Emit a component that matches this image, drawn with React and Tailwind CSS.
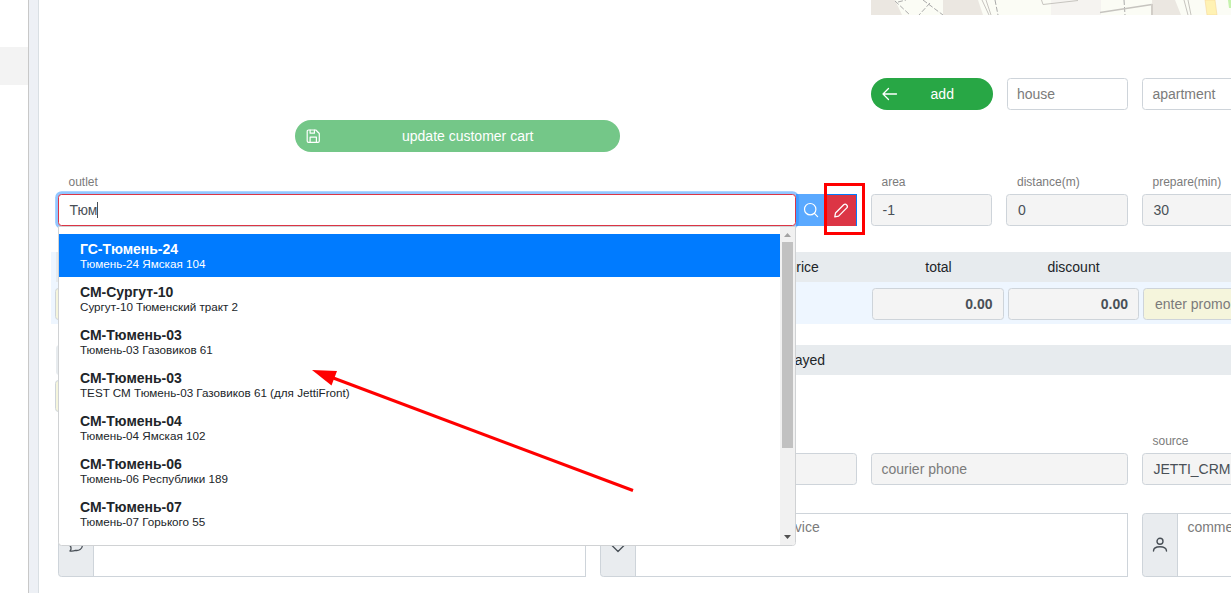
import React from "react";

const cx = (...a) => a.filter(Boolean).join(" ");

const outlets = [
  { name: "ГС-Тюмень-24", address: "Тюмень-24 Ямская 104" },
  { name: "СМ-Сургут-10", address: "Сургут-10 Тюменский тракт 2" },
  { name: "СМ-Тюмень-03", address: "Тюмень-03 Газовиков 61" },
  { name: "СМ-Тюмень-03", address: "TEST СМ Тюмень-03 Газовиков 61 (для JettiFront)" },
  { name: "СМ-Тюмень-04", address: "Тюмень-04 Ямская 102" },
  { name: "СМ-Тюмень-06", address: "Тюмень-06 Республики 189" },
  { name: "СМ-Тюмень-07", address: "Тюмень-07 Горького 55" },
];

function Icon({ className, children }) {
  return (
    <svg
      viewBox="0 0 16 16"
      fill="none"
      stroke="currentColor"
      strokeLinecap="round"
      strokeLinejoin="round"
      className={cx("h-4 w-4 shrink-0", className)}
    >
      {children}
    </svg>
  );
}

const ArrowLeftIcon = (props) => (
  <Icon {...props}>
    <path d="M6.500 2.500 1 8 6.500 13.500M1 8h13.500" strokeWidth="1.3" />
  </Icon>
);

const SaveIcon = (props) => (
  <Icon {...props}>
    <path
      d="M2.500 2h7.300l3.500 3.500V13a1.300 1.300 0 0 1-1.300 1.300H2.500A1.300 1.300 0 0 1 1.200 13V3.300A1.300 1.300 0 0 1 2.500 2Z"
      strokeWidth="1.2"
    />
    <path d="M4.100 2.200v3h4.300v-3M4.100 14V9.200h6.300V14" strokeWidth="1.2" />
  </Icon>
);

const SearchIcon = (props) => (
  <Icon {...props}>
    <circle cx="7.2" cy="7.2" r="5.7" strokeWidth="1.2" />
    <path d="m11.400 11.400 3.200 3.200" strokeWidth="1.2" />
  </Icon>
);

const PencilIcon = (props) => (
  <Icon {...props}>
    <path
      d="M1.800 13.800 2.500 10 10.700 1.800a2.200 2.200 0 0 1 3.100 3.100L5.600 13.100Z"
      strokeWidth="1.3"
    />
  </Icon>
);

const PersonIcon = (props) => (
  <Icon {...props}>
    <circle cx="8" cy="4.3" r="3" strokeWidth="1.4" />
    <path d="M1.500 14c0-3 2.500-4.300 6.500-4.300s6.500 1.300 6.500 4.300" strokeWidth="1.4" />
  </Icon>
);

const BubbleIcon = (props) => (
  <Icon {...props}>
    <path
      d="M2 14c1-1.200 1.300-2.200 1-3.400C.4 6.400 3 2 8 2s7 3.200 6.500 6.500C14 12 11 14 7.500 13.400 6 14 4 14.200 2 14Z"
      strokeWidth="1.3"
    />
  </Icon>
);

const DiamondIcon = (props) => (
  <Icon {...props}>
    <path d="M8 14.500 1.500 8 4 3h8l2.500 5ZM5 8h6" strokeWidth="1.3" />
  </Icon>
);

function Label({ children, className }) {
  return (
    <div
      className={cx(
        "h-6 pl-[10.500px] text-xs leading-6 text-[#7b7b7b]",
        className,
      )}
    >
      {children}
    </div>
  );
}

function Field({ children, className, pad = "px-[10.500px]" }) {
  return (
    <div
      className={cx(
        "flex h-8 shrink-0 items-center overflow-hidden rounded-[3.500px] border border-[#ced4da] whitespace-nowrap",
        pad,
        className,
      )}
    >
      {children}
    </div>
  );
}

function Comment({ icon, text, className }) {
  return (
    <div className={cx("flex h-16 w-[528px] shrink-0", className)}>
      <div className="flex w-9 shrink-0 items-center justify-center rounded-l-[3.500px] border border-[#ced4da] bg-[#e9ecef] text-[#495057]">
        {icon}
      </div>
      <div className="-ml-px grow border border-[#ced4da] px-[9.400px] pt-[3px] leading-[21px] whitespace-nowrap text-[#7b7b7b]">
        {text}
      </div>
    </div>
  );
}

function MapStrip() {
  return (
    <svg viewBox="0 0 360 15" className="h-[15px] w-[360px] shrink-0">
      <rect width="360" height="15" fill="#fbfcf5" />
      <path d="M0 0h24l7 15H0ZM72 0h35l5 15H72ZM281 0h23l6 15h-29Z" fill="#ebe7e1" />
      <path d="M180 0h50v15h-50Z" fill="#f5f3f0" />
      <path
        d="m24 1 15 14M27 2l8-2M59 3 48 15M52 0l20 15M124 0l3 15M253 0l1 15"
        stroke="#aaa"
        strokeDasharray="5 2"
        fill="none"
      />
      <path d="m111 0 7 15M115 0l5 15M313 0l4 15M317 0l3 15" stroke="#c6c4bf" fill="none" />
      <path d="m170.500 0 1.500 4.500 35-4" stroke="#c6c4bf" fill="none" />
      <path d="m229 12.500 52-8" stroke="#c6c4bf" strokeWidth="1.500" />
      <path d="M281 4v11" stroke="#d2cec8" strokeWidth="2" />
      <path d="M334 0h10l2 15h-10Z" fill="#fff2b3" stroke="#f7d69a" strokeWidth=".6" />
      <path d="M357 0h3v8h-2Z" fill="#c5f2ad" />
    </svg>
  );
}

function OutletMenu() {
  return (
    <div className="absolute top-8 left-0 z-10 flex h-80 w-[738px] overflow-hidden rounded-b-[3.500px] border border-[#d0d2d4] bg-white">
      <div className="grow pt-[7px]">
        {outlets.map((o, i) => (
          <div
            key={i}
            className={cx(
              "h-[43px] pt-[5px] pl-[21px]",
              i === 0 ? "bg-[#007bff] text-white" : "text-[#212529]",
            )}
          >
            <div className="text-sm leading-[21px] font-bold">{o.name}</div>
            <div className="-mt-1 text-[11.670px] leading-[15px]">
              {o.address}
            </div>
          </div>
        ))}
      </div>
      {/* scrollbar */}
      <div className="flex w-[15px] shrink-0 flex-col items-center bg-[#f1f1f1]">
        <svg viewBox="0 0 15 15" className="h-[15px] w-[15px]">
          <path d="M4 10h7L7.500 6Z" fill="#a3a3a3" />
        </svg>
        <div className="h-[206px] w-[11px] bg-[#c1c1c1]" />
        <svg viewBox="0 0 15 15" className="mt-auto h-[15px] w-[15px]">
          <path d="M4 5h7L7.500 9Z" fill="#505050" />
        </svg>
      </div>
    </div>
  );
}

function OutletPicker() {
  return (
    <div className="relative flex h-8 w-[799px]">
      <div className="relative flex h-8 w-[738px] items-center rounded-[3.500px] border border-[#dc3545] bg-white px-[10.500px] text-[#495057] shadow-[0_0_0_2.800px_rgba(38,143,255,0.5)]">
        Тюм
        <span className="h-4 w-px bg-[#495057]" />
      </div>
      <div className="flex w-[30px] items-center justify-center bg-[#5aa9ff] text-white">
        <SearchIcon />
      </div>
      <div className="flex w-[31px] items-center justify-center border-t border-r border-[#007bff] bg-[#dc3545] text-white">
        <PencilIcon />
      </div>
      <OutletMenu />
      {/* highlight frame around the edit button */}
      <div className="absolute -top-[11px] left-[766px] z-30 h-[52px] w-[41px] border-3 border-[#ff0000]" />
    </div>
  );
}

export default function App() {
  return (
    <div className="relative flex h-[593px] w-[1231px] overflow-hidden bg-white font-['Liberation_Sans',Arial,sans-serif] text-sm text-[#212529]">
      <aside className="w-[29px] shrink-0 border-r border-[#c8c8c8] pt-[47px]">
        <div className="h-[38px] bg-[#f3f3f3]" />
      </aside>
      <div className="w-[10px] shrink-0 border-r border-[#d9dfe3] bg-[#edf0f5]" />

      <main className="flex min-w-0 grow flex-col overflow-hidden">
        <div className="ml-[832px]">
          <MapStrip />
        </div>

        <div className="mt-[63px] ml-[832px] flex gap-[14px]">
          <button
            type="button"
            className="flex h-8 w-[122px] shrink-0 items-center rounded-full bg-[#28a745] pr-[11px] pl-[10.500px] text-white"
          >
            <ArrowLeftIcon />
            <span className="grow pl-[5px] text-center">add</span>
          </button>
          <Field pad="px-[9px]" className="w-[121px] text-[#7b7b7b]">
            house
          </Field>
          <Field pad="px-[9.400px]" className="w-[121px] text-[#7b7b7b]">
            apartment
          </Field>
        </div>

        <button
          type="button"
          className="mt-[10px] ml-[256px] flex h-8 w-[325px] shrink-0 items-center rounded-full bg-[#74c788] pr-[10px] pl-[10.500px] text-white"
        >
          <SaveIcon />
          <span className="grow pl-[4px] text-center">update customer cart</span>
        </button>

        <div className="mt-[18px] ml-[19px] flex shrink-0 gap-[14px]">
          <div>
            <Label>outlet</Label>
            <OutletPicker />
          </div>
          <div>
            <Label>area</Label>
            <Field className="w-[121px] bg-[#f4f4f4] text-[#495057]">-1</Field>
          </div>
          <div>
            <Label className="pl-[11px]">distance(m)</Label>
            <Field pad="px-[11px]" className="w-[122px] bg-[#f4f4f4] text-[#495057]">
              0
            </Field>
          </div>
          <div>
            <Label>prepare(min)</Label>
            <Field className="w-[122px] bg-[#f4f4f4] text-[#495057]">30</Field>
          </div>
        </div>

        {/* totals */}
        <div className="mt-[26px] ml-[12px] shrink-0 bg-[#eef6ff]">
          <div className="ml-[5px] flex h-[30px] items-center bg-[#e7ebee] pl-[680.500px] text-center">
            <div className="w-[134.500px] shrink-0">price</div>
            <div className="w-[135px] shrink-0">total</div>
            <div className="w-[135px] shrink-0">discount</div>
          </div>
          <div className="flex h-[42px] pt-[6px] pl-[4px]">
            <Field className="w-[541px] bg-[#f5f5dc]" />
            <Field className="ml-[276px] w-[132px] justify-end bg-[#f4f4f4] font-bold text-[#495057]">
              0.00
            </Field>
            <Field
              pad="px-[10px]"
              className="ml-[4px] w-[131px] justify-end bg-[#f4f4f4] font-bold text-[#495057]"
            >
              0.00
            </Field>
            <Field pad="px-[11px]" className="ml-[4px] w-[131px] bg-[#f5f5dc] text-[#7b7b7b]">
              enter promo
            </Field>
          </div>
        </div>

        {/* payments */}
        <div className="mt-[21px] ml-[17px] flex h-[30px] shrink-0 items-center rounded-l-[3.500px] bg-[#e7ebee] pl-[682.500px]">
          <div className="w-[135px] text-center">payed</div>
        </div>
        <Field className="mt-[5px] ml-[16px] w-[300px] bg-[#f5f5dc]" />

        <div className="mt-[17px] ml-[561px] flex shrink-0 items-end gap-[14px]">
          <Field className="w-[257px] bg-[#f4f4f4]" />
          <Field pad="px-[9.500px]" className="w-[257px] bg-[#f4f4f4] text-[#7b7b7b]">
            courier phone
          </Field>
          <div>
            <Label>source</Label>
            <Field pad="pl-[10.500px]" className="w-[121px] bg-[#f4f4f4] text-[#495057]">
              JETTI_CRM
            </Field>
          </div>
        </div>

        <div className="mt-[28px] ml-[19px] flex shrink-0 gap-[14px]">
          <Comment icon={<BubbleIcon />} />
          <Comment icon={<DiamondIcon />} text="comment for kitchen service" />
          <Comment icon={<PersonIcon />} text="comment" />
        </div>
      </main>

      {/* pointer to the outlet list */}
      <svg
        viewBox="0 0 322 122"
        className="pointer-events-none absolute top-[370px] left-[312px] z-40 h-[122px] w-[322px]"
      >
        <path d="M20 7.500 321 120.500" stroke="#f00" strokeWidth="3" />
        <path d="M0 0 25 1 19.500 15.500Z" fill="#f00" />
      </svg>
    </div>
  );
}
